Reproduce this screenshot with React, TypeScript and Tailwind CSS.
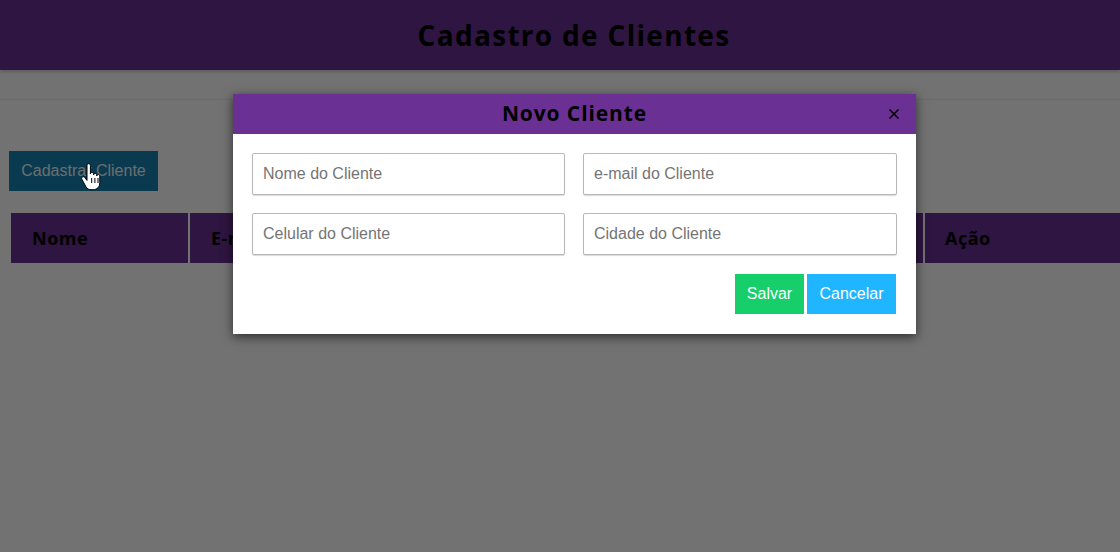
import { X } from "lucide-react";

const heading = { fontFamily: '"Open Sans", "Liberation Sans", sans-serif' };

const Campo = ({ placeholder }: { placeholder: string }) => (
  <input
    type="text"
    placeholder={placeholder}
    className="h-[42px] w-full rounded-[2px] border border-[#b8b8b8] bg-white px-[10px] text-[16px] text-[#333] shadow-[0_1px_1px_rgba(0,0,0,0.15)] outline-none placeholder:text-[#757575]"
  />
);

const Cursor = () => (
  <svg
    className="absolute left-[80px] top-[163px]"
    width="22"
    height="28"
    viewBox="0 0 22 28"
  >
    <path
      d="M7 2.5c0-1.1.8-1.8 1.7-1.8s1.7.7 1.7 1.8V11c0-.9.7-1.5 1.6-1.5s1.6.6 1.6 1.5v1c0-.9.7-1.5 1.6-1.5s1.6.6 1.6 1.5v1c0-.9.7-1.4 1.5-1.4s1.5.6 1.5 1.5v6.4c0 4.3-2.6 7.2-6.6 7.2h-2.2c-2.3 0-3.8-1-5-2.8L2 16.4c-.6-.9-.4-1.9.4-2.4.8-.5 1.8-.3 2.4.5L7 17.4V2.5z"
      fill="#fff"
      stroke="#000"
      strokeWidth="1"
    />
    <path d="M11.7 15v5M14.9 15v5M18 15v5" stroke="#000" strokeWidth="1" />
  </svg>
);

export default function App() {
  return (
    <div
      className="relative h-[552px] overflow-hidden bg-white"
      style={{ fontFamily: '"Liberation Sans", Arial, sans-serif' }}
    >
      <header className="flex h-[70px] items-center justify-center bg-[#692f91] pl-[28px] shadow-[0_2px_3px_rgba(0,0,0,0.2)]">
        <h1 className="text-[28px] font-bold tracking-[1.3px] text-black" style={heading}>
          Cadastro de Clientes
        </h1>
      </header>
      <div className="h-[30px] border-b border-[#ececec]" />

      <main className="pl-[9px] pt-[51px]">
        <button className="h-[40px] w-[149px] bg-[#1682b1] text-[16px] text-[#eaf6fb]">
          Cadastrar Cliente
        </button>

        <table
          className="mt-[20px] w-[1113px] table-fixed border-separate border-spacing-[2px]"
          style={heading}
        >
          <colgroup>
            <col className="w-[177px]" />
            <col className="w-[244px]" />
            <col className="w-[243px]" />
            <col className="w-[242px]" />
            <col />
          </colgroup>
          <thead>
            <tr className="h-[50px] bg-[#692f91] text-left text-[18px] font-bold tracking-[0.5px] text-black">
              <th className="px-[21px]">Nome</th>
              <th className="px-[21px]">E-mail</th>
              <th className="px-[21px]">Celular</th>
              <th className="px-[21px]">Cidade</th>
              <th className="px-[20px]">Ação</th>
            </tr>
          </thead>
          <tbody />
        </table>
      </main>

      <div className="absolute inset-0 bg-[rgba(0,0,0,0.553)]" />

      <div className="absolute left-[233px] top-[94px] w-[683px] bg-white shadow-[0_3px_10px_rgba(0,0,0,0.6)]">
        <div className="relative flex h-[40px] items-center justify-center bg-[#6b3093]">
          <h2 className="text-[21px] font-bold tracking-[0.9px] text-black" style={heading}>
            Novo Cliente
          </h2>
          <X className="absolute right-[14px] top-[12px] h-[16px] w-[16px] text-black" strokeWidth={2.5} />
        </div>
        <div className="px-[19px] pb-[20px] pt-[19px]">
          <div className="grid grid-cols-[313px_314px] gap-x-[18px] gap-y-[18px]">
            <Campo placeholder="Nome do Cliente" />
            <Campo placeholder="e-mail do Cliente" />
            <Campo placeholder="Celular do Cliente" />
            <Campo placeholder="Cidade do Cliente" />
          </div>
          <div className="mt-[19px] flex justify-end gap-[3px] pr-[1px]">
            <button className="h-[40px] w-[69px] bg-[#16ce6a] text-[16px] text-white">Salvar</button>
            <button className="h-[40px] w-[89px] bg-[#20b6ff] text-[16px] text-white">Cancelar</button>
          </div>
        </div>
      </div>

      <Cursor />
    </div>
  );
}
